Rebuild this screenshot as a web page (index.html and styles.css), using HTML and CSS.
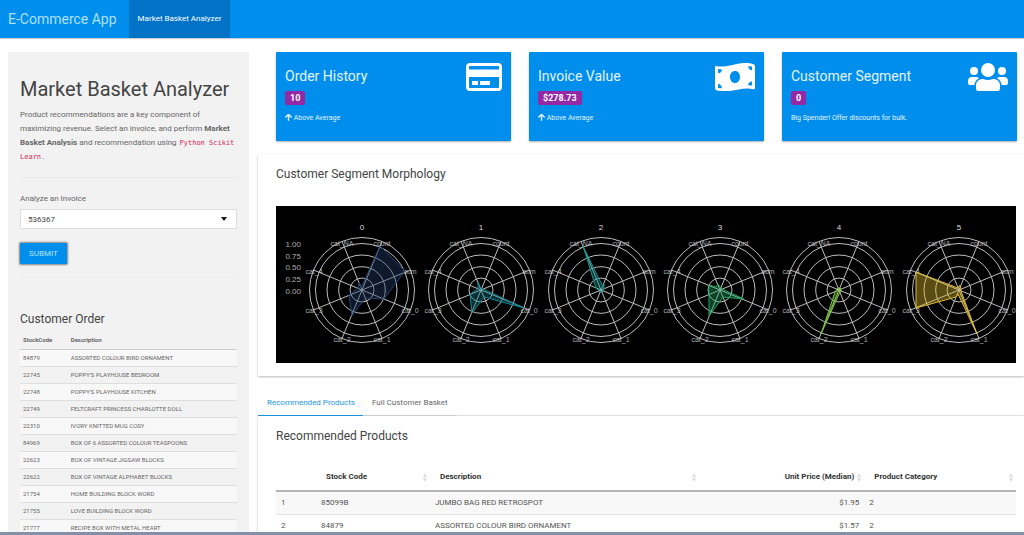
FILE: index.html
```html
<!DOCTYPE html>
<html lang="en">
<head>
<meta charset="utf-8">
<meta name="viewport" content="width=device-width, initial-scale=1">
<title>E-Commerce App</title>
<link rel="stylesheet" href="styles.css">
</head>
<body>
<div class="app">
  <nav class="navbar">
    <a class="brand" href="#">E-Commerce App</a>
    <a class="nav-link" href="#" aria-current="page">Market Basket Analyzer</a>
  </nav>
  <div class="layout">
    <aside class="sidebar">
      <h1>Market Basket Analyzer</h1>
      <p class="intro">Product recommendations are a key component of maximizing revenue. Select an invoice, and perform <strong>Market Basket Analysis</strong> and recommendation using <code>Python Scikit Learn</code>.</p>
      <hr>
      <form class="invoice-form">
        <label for="invoice">Analyze an Invoice</label>
        <div class="select-wrap">
          <select id="invoice"><option>536367</option></select>
          <svg class="caret" viewBox="0 0 6 4" aria-hidden="true"><path d="M0 0h6L3.500 3.500h-1z" fill="#111"/></svg>
        </div>
        <button class="submit" type="button">SUBMIT</button>
      </form>
      <hr>
      <h2 class="order-title">Customer Order</h2>
      <table class="order-table">
        <thead><tr><th class="code">StockCode</th><th>Description</th></tr></thead>
        <tbody>
          <tr><td>84879</td><td>ASSORTED COLOUR BIRD ORNAMENT</td></tr>
          <tr><td>22745</td><td>POPPY'S PLAYHOUSE BEDROOM</td></tr>
          <tr><td>22748</td><td>POPPY'S PLAYHOUSE KITCHEN</td></tr>
          <tr><td>22749</td><td>FELTCRAFT PRINCESS CHARLOTTE DOLL</td></tr>
          <tr><td>22310</td><td>IVORY KNITTED MUG COSY</td></tr>
          <tr><td>84969</td><td>BOX OF 6 ASSORTED COLOUR TEASPOONS</td></tr>
          <tr><td>22623</td><td>BOX OF VINTAGE JIGSAW BLOCKS</td></tr>
          <tr><td>22622</td><td>BOX OF VINTAGE ALPHABET BLOCKS</td></tr>
          <tr><td>21754</td><td>HOME BUILDING BLOCK WORD</td></tr>
          <tr><td>21755</td><td>LOVE BUILDING BLOCK WORD</td></tr>
          <tr><td>21777</td><td>RECIPE BOX WITH METAL HEART</td></tr>
        </tbody>
      </table>
    </aside>
    <main class="main">
      <section class="tiles">
        <article class="tile">
          <div>
            <h2>Order History</h2>
            <span class="badge">10</span>
            <p><svg class="arrow" viewBox="0 0 448 448" aria-hidden="true"><path d="M24 222L224 24l200 198M224 40v390" fill="none" stroke="currentColor" stroke-width="90"/></svg> Above Average</p>
          </div>
          <svg class="tile-icon" viewBox="0 0 36 28" aria-hidden="true"><path fill="#fff" fill-rule="evenodd" d="M4 0h28a4 4 0 0 1 4 4v20a4 4 0 0 1-4 4H4a4 4 0 0 1-4-4V4a4 4 0 0 1 4-4zM3 6.500h30V4a1 1 0 0 0-1-1H4a1 1 0 0 0-1 1zM3 14v10a1 1 0 0 0 1 1h28a1 1 0 0 0 1-1V14zM6 18h6v4H6zM14 18h10v4H14z"/></svg>
        </article>
        <article class="tile">
          <div>
            <h2>Invoice Value</h2>
            <span class="badge">$278.73</span>
            <p><svg class="arrow" viewBox="0 0 448 448" aria-hidden="true"><path d="M24 222L224 24l200 198M224 40v390" fill="none" stroke="currentColor" stroke-width="90"/></svg> Above Average</p>
          </div>
          <svg class="tile-icon bill" viewBox="0 0 40 28" aria-hidden="true"><path fill="#fff" fill-rule="evenodd" d="M1 3C14 6 24-3 38 1q2 .6 2 2v22q0 1.500-1.500 1.200C26 23 16 31 2 27.500Q0 27 0 25V4Q0 2.700 1 3zM20 8c-3 0-5 2.700-5 6s2 6 5 6 5-2.700 5-6-2-6-5-6zM3 6v4q3.500 0 4-3.600zM3 25v-4q3.500.2 4 4.300zM37 3.500v3.700q-3 .1-4-3.900zM37 22.500v-4q-3.500.1-4 3.800z"/></svg>
        </article>
        <article class="tile">
          <div>
            <h2>Customer Segment</h2>
            <span class="badge">0</span>
            <p>Big Spender! Offer discounts for bulk.</p>
          </div>
          <svg class="tile-icon bill" viewBox="0 0 40 28" aria-hidden="true"><g fill="#fff"><circle cx="20" cy="7" r="7"/><circle cx="6" cy="8" r="4"/><circle cx="34" cy="8" r="4"/><path d="M8 25.500v-3C8 18.500 11 16 15 16q5 2 10 0c4 0 7 2.500 7 6.500v3q0 2.500-2.500 2.500h-19Q8 28 8 25.500zM0 20v-2q0-4 4-4h4q2 0 3 1.200-4 2-4.600 6.800H2q-2 0-2-2zM40 20v-2q0-4-4-4h-4q-2 0-3 1.200 4 2 4.600 6.800H38q2 0 2-2z"/></g></svg>
        </article>
      </section>
      <section class="panel chart-panel">
        <h2>Customer Segment Morphology</h2>
        <svg class="chart" viewBox="0 0 740 157" role="img" aria-label="Radar charts of customer segments 0 to 5">
          <defs>
            <g id="grid">
              <g class="rings"><circle r="12"/><circle r="23.300"/><circle r="35"/><circle r="46.500"/><circle r="52.500"/>
              <path d="M-20-48.500L20 48.500M20-48.500L-20 48.500M-48.500-20L48.500 20M48.500-20L-48.500 20"/></g>
              <g class="labels"><text x="-20" y="-44">cat_NA</text><text x="20" y="-44">count</text><text x="48" y="-16">sum</text><text x="48" y="23">cat_0</text><text x="20" y="52">cat_1</text><text x="-20" y="52">cat_2</text><text x="-48" y="23">cat_3</text><text x="-48" y="-16">cat_4</text></g>
            </g>
          </defs>
          <rect width="740" height="157" fill="#000"/>
          <g class="scale"><text x="25" y="41">1.00</text><text x="25" y="53">0.75</text><text x="25" y="64">0.50</text><text x="25" y="76">0.25</text><text x="25" y="88">0.00</text></g>
          <g transform="translate(86 84)"><use href="#grid"/><text class="facet" y="-60">0</text><path class="shape s0" d="M18-44L43-19 22 9 3 8-10 26-13 5-4-2-3-8-1-2z"/></g>
          <g transform="translate(205 84)"><use href="#grid"/><text class="facet" y="-60">1</text><path class="shape s1" d="M0-1L2-1 43 18 3 7-9 23-11 4-3-1-3-8z"/></g>
          <g transform="translate(325 84)"><use href="#grid"/><text class="facet" y="-60">2</text><path class="shape s2" d="M-18-44L2-3 3-6 3-1 2 1 1 2-1 2-3 0-5-2z"/></g>
          <g transform="translate(444 84)"><use href="#grid"/><text class="facet" y="-60">3</text><path class="shape s3" d="M-2-6L1-2 2-1 24 9 3 7-11 26-11 5-11-5-4-3z"/></g>
          <g transform="translate(563 84)"><use href="#grid"/><text class="facet" y="-60">4</text><path class="shape s4" d="M-18 44L-4 2-2-1-1-2 1-2 2-1 2 1 1 2z"/></g>
          <g transform="translate(683 84)"><use href="#grid"/><text class="facet" y="-60">5</text><path class="shape s5" d="M-43-18L-1-2 1-5 2-1 2 1 18 44-1 4-3 7-43 18z"/></g>
        </svg>
      </section>
      <section class="products">
        <div class="tabs" role="tablist">
          <button class="tab active" role="tab" aria-selected="true">Recommended Products</button>
          <button class="tab" role="tab" aria-selected="false">Full Customer Basket</button>
        </div>
        <div class="panel product-panel">
          <h2>Recommended Products</h2>
          <table class="product-table">
            <colgroup><col class="c-index"><col class="c-code"><col class="c-desc"><col class="c-price"><col class="c-cat"></colgroup>
            <thead><tr>
              <th></th>
              <th><span>Stock Code<i class="sort"></i></span></th>
              <th><span>Description<i class="sort"></i></span></th>
              <th class="price"><span>Unit Price (Median)<i class="sort"></i></span></th>
              <th><span>Product Category<i class="sort"></i></span></th>
            </tr></thead>
            <tbody>
              <tr><td>1</td><td>85099B</td><td>JUMBO BAG RED RETROSPOT</td><td class="price">$1.95</td><td>2</td></tr>
              <tr><td>2</td><td>84879</td><td>ASSORTED COLOUR BIRD ORNAMENT</td><td class="price">$1.57</td><td>2</td></tr>
            </tbody>
          </table>
        </div>
      </section>
    </main>
  </div>
</div>
</body>
</html>
```
FILE: styles.css
```css
* { box-sizing: border-box; }
body { margin: 0; background: #fff; color: #666; font: 7px/14px Roboto, sans-serif; }
h1, h2, p { margin: 0; font-weight: 400; }
.app { display: flex; flex-direction: column; height: 100vh; overflow: hidden; border-bottom: 3px solid #8490a8; }

.navbar { display: flex; flex: none; height: 38px; background: #008eec; box-shadow: 0 1px 1px #0003; }
.navbar a { display: flex; align-items: center; text-decoration: none; }
.brand { padding: 0 12px 0 8px; color: #aee0ff; font-size: 14px; }
.nav-link { padding: 0 9px; background: #0073c6; color: #fff; font-size: 8px; }

.layout { display: grid; grid-template-columns: minmax(0, 241fr) minmax(0, 766fr); gap: 9px; flex: 1; min-height: 0; padding: 14px 0 0 8px; }
.sidebar { padding: 23px 12px 0; background: #f2f2f2; }
.sidebar h1 { color: #444; font-size: 20px; line-height: 28px; white-space: nowrap; }
.intro { padding-top: 5px; font-size: 8px; }
.intro strong { font-weight: 700; }
code { padding: 0 1px; color: #d81b52; font: 7px "DejaVu Sans Mono", monospace; }
hr { height: 1px; margin: 13px 0 14px; border: 0; background: #eaeaea; }
.invoice-form { display: flex; flex-direction: column; align-items: flex-start; }
.invoice-form label { font-size: 8px; }
.select-wrap { display: grid; align-items: center; width: 100%; margin: 3px 0 14px; }
.select-wrap > * { grid-area: 1 / 1; }
select { width: 100%; height: 20px; padding: 0 7px; appearance: none; background: #fff; border: 1px solid #ddd; border-radius: 1px; color: #444; font: 8px Roboto, sans-serif; }
.caret { justify-self: end; width: 6px; height: 4px; margin-right: 10px; pointer-events: none; }
.submit { height: 21px; padding: 0 9px; border: 0; border-radius: 1px; background: #008eec; box-shadow: 0 0 2px 1px #0007; color: #b8e4ff; font: 8px Roboto, sans-serif; }
.order-title { padding-top: 17px; color: #444; font-size: 12px; line-height: 20px; }

table { width: 100%; border-collapse: collapse; table-layout: fixed; text-align: left; }
.order-table { margin-top: 3px; font-size: 6px; line-height: 8px; }
.order-table th, .order-table td { height: 17px; padding: 0 3px; border-bottom: 1px solid #dedede; white-space: nowrap; }
.order-table th { border-bottom-color: #ccc; font-weight: 700; }
.order-table .code { width: 22%; }
.order-table tbody tr:nth-child(odd) { background: #f8f8f8; }

.main { display: flex; flex-direction: column; min-width: 0; }
.tiles { display: grid; grid-template-columns: repeat(3, minmax(0, 1fr)); gap: 18px; flex: none; padding: 0 7px 0 18px; }
.tile { display: flex; justify-content: space-between; align-items: flex-start; min-height: 89px; padding: 11px 9px; border-radius: 1px; background: #008eec; box-shadow: 0 1px 2px #0005; color: #e2f4ff; }
.tile h2 { padding-top: 3px; font-size: 14px; line-height: 20px; }
.tile p { padding-top: 6px; }
.badge { display: table; margin-top: 5px; padding: 0 5px; border-radius: 2px; background: #9428a5; color: #fff; font-size: 9px; font-weight: 700; }
.arrow { width: 7px; height: 7px; vertical-align: -1px; }
.tile-icon { flex: none; width: 36px; height: 28px; }
.tile-icon.bill { width: 40px; }

.panel { background: #fff; box-shadow: 0 1px 2px #0004; }
.panel h2 { color: #444; font-size: 12px; line-height: 20px; }
.chart-panel { flex: none; margin-top: 13px; padding: 10px 8px 13px 18px; }
.chart { display: block; width: 100%; margin-top: 22px; font: 8px "Liberation Sans", sans-serif; }
.rings { fill: none; stroke: #bdbdbd; stroke-width: 1; }
.labels, .scale { fill: #ccc; opacity: .85; }
.labels text, .facet { text-anchor: middle; }
.labels { font-size: 7px; }
.scale text { text-anchor: end; }
.facet { fill: #ddd; }
.shape { fill-opacity: .4; stroke-width: 1; }
.s0 { fill: #24426f; stroke: #24426f; }
.s1 { fill: #137a86; stroke: #138a98; }
.s2 { fill: #16908a; stroke: #16908a; }
.s3 { fill: #1fa45f; stroke: #1fa45f; }
.s4 { fill: #74c336; stroke: #74c336; }
.s5 { fill: #e0be30; stroke: #e0be30; }

.products { margin-top: 14px; }
.tabs { display: flex; height: 26px; border-bottom: 1px solid #e6e6e6; }
.tab { height: 26px; padding: 0 9px; border: 0; border-bottom: 1px solid #ccc; background: none; color: #666; font: 8px Roboto, sans-serif; }
.tab.active { padding-right: 8px; border-bottom: 1px solid #1b8fd8; color: #1b95e0; }
.product-panel { padding: 10px 8px 0 18px; }
.product-table { margin-top: 18px; color: #555; font-size: 8px; line-height: 12px; }
.product-table th { height: 27px; padding: 0 3px 0 10px; border-bottom: 2px solid #b5b5b5; color: #333; font-weight: 700; }
.product-table th span { display: flex; justify-content: space-between; align-items: center; gap: 3px; }
.product-table th.price span { justify-content: flex-end; }
.product-table td { height: 23px; padding: 0 5px; border-bottom: 1px solid #e2e2e2; }
.product-table .price { text-align: right; }
.product-table tbody tr:nth-child(odd) { background: #f8f8f8; }
.c-index { width: 40px; }
.c-code { width: 15.400%; }
.c-desc { width: 36.400%; }
.c-cat { width: 20.500%; }
.sort { display: flex; flex-direction: column; gap: 1px; }
.sort::before, .sort::after { content: ""; border: 2px solid transparent; }
.sort::before { border-top: 0; border-bottom: 4px solid #ddd; }
.sort::after { border-bottom: 0; border-top: 4px solid #ddd; }
```
